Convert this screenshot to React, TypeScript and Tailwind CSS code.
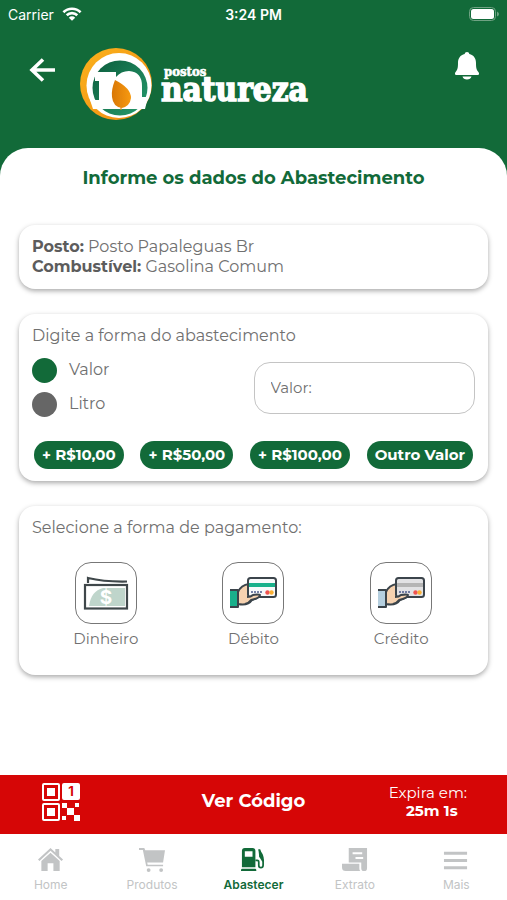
import type { ReactNode } from "react";

const quickValues = ["+ R$10,00", "+ R$50,00", "+ R$100,00", "Outro Valor"];

function StatusBar() {
  return (
    <div className="grid h-7 grid-cols-3 items-center px-2 font-['Inter',sans-serif] text-[14px] text-white">
      <div className="flex items-center gap-2">
        <span>Carrier</span>
        <svg viewBox="0 0 20 14" className="h-[14px] w-[20px]" fill="none" stroke="currentColor" strokeWidth="2.6">
          <path d="M1.4 5.2a12.3 12.3 0 0 1 17.2 0" />
          <path d="M4.7 8.3a7.6 7.6 0 0 1 10.600 0" />
          <path d="M10 13.8 6.8 10.7a4.5 4.5 0 0 1 6.400 0Z" fill="currentColor" stroke="none" />
        </svg>
      </div>
      <span className="text-center font-semibold">3:24 PM</span>
      <svg viewBox="0 0 30 14" className="h-[14px] w-[30px] justify-self-end">
        <rect x="0.5" y="0.5" width="26" height="13" rx="4" fill="none" stroke="#6fa283" />
        <rect x="2" y="2" width="23" height="10" rx="2.5" fill="white" />
        <path d="M28 4.5q2 1 2 2.5t-2 2.5Z" fill="#6fa283" />
      </svg>
    </div>
  );
}

function Logo() {
  return (
    <svg viewBox="0 0 232 76" className="h-[76px] w-[232px]" role="img" aria-label="Postos Natureza">
      <defs>
        <linearGradient id="ring" x1="0" x2="1" y1="0" y2="1">
          <stop offset="0" stopColor="#fbb31c" />
          <stop offset="1" stopColor="#f08a12" />
        </linearGradient>
        <linearGradient id="disc" x1="0" x2="1" y1="0" y2="1">
          <stop offset="0" stopColor="#0c5c3c" />
          <stop offset="1" stopColor="#279c6e" />
        </linearGradient>
        <linearGradient id="leaf" x1="0" x2="1">
          <stop offset="0" stopColor="#d97706" />
          <stop offset="1" stopColor="#f79a10" />
        </linearGradient>
      </defs>
      <circle cx="38" cy="38" r="36" fill="url(#ring)" />
      <circle cx="41" cy="39.500" r="32.500" fill="white" />
      <circle cx="42" cy="42" r="27.500" fill="url(#disc)" />
      <path d="M17 26h21v5q5-6 13-6 13 1 13 15v11h6l-3 12H15l-3-9h9V35h-4Z" fill="white" />
      <path d="M37 34q16 8 16 18-1 8-9 10-9-1-10-11-1-7 3-17Z" fill="url(#leaf)" />
      <path d="M43 49v15" stroke="#e58a10" strokeWidth="1.200" />
      <text x="86" y="30" fill="white" stroke="white" strokeWidth="0.6" className="font-['DejaVu_Serif_Condensed','DejaVu_Serif',serif] text-[13px] font-bold">
        postos
      </text>
      <text x="83" y="55" fill="white" stroke="white" strokeWidth="1.4" className="font-['DejaVu_Serif_Condensed','DejaVu_Serif',serif] text-[33px] font-bold">
        natureza
      </text>
    </svg>
  );
}

function Header() {
  return (
    <header className="flex items-start justify-between px-7 pt-[18px] pb-[26px] text-white">
      <div className="flex items-start">
        <button aria-label="Voltar" className="pt-[10px]">
          <svg viewBox="0 0 28 28" className="size-7" fill="none" stroke="currentColor" strokeWidth="3.6">
            <path d="M27 14H4M15 3.500 4 14l11 10.500" />
          </svg>
        </button>
        <div className="pl-[22px]">
          <Logo />
        </div>
      </div>
      <button aria-label="Notificações" className="pt-[6px]">
        <svg viewBox="0 0 24 28" className="h-7 w-6" fill="currentColor">
          <path d="M12 0c1.300 0 2.200.9 2.300 2.100 4.500 1 6.700 4.500 6.700 8.900 0 5 .6 7 2.200 8.700 1.400 1.500 1 3.300-.7 3.300h-21c-1.700 0-2.100-1.800-.7-3.300C2.400 18 3 16 3 11c0-4.400 2.200-7.900 6.700-8.900C9.800.9 10.700 0 12 0ZM7.500 24.500h9c-.4 1.800-2.300 3-4.500 3s-4.100-1.200-4.500-3Z" />
        </svg>
      </button>
    </header>
  );
}

function Card({ children }: { children: ReactNode }) {
  return (
    <section className="rounded-2xl bg-white px-[13px] shadow-[0_2px_5px_rgba(0,0,0,0.34)]">
      {children}
    </section>
  );
}

function CashIcon() {
  return (
    <svg viewBox="0 0 46 34" className="h-[34px] w-[46px]">
      <path d="M5 7V2Q22 6 44 5.500" fill="none" stroke="#3f474a" strokeWidth="2.2" />
      <rect x="2" y="9" width="42" height="23.500" fill="#fff" stroke="#3f474a" strokeWidth="2.2" />
      <path d="M6 30Q8 15 20 12h22v18Z" fill="#bfd5cb" />
      <text x="23" y="28" textAnchor="middle" fill="white" className="font-['Inter',sans-serif] text-[19px] font-bold">
        $
      </text>
    </svg>
  );
}

function CardIcon({ sleeve, stripe, face }: { sleeve: string; stripe: string; face: string }) {
  return (
    <svg viewBox="0 0 48 32" className="h-[32px] w-[48px]" stroke="#3b444b" strokeWidth="2" strokeLinejoin="round">
      <path d="M1 13h8v17H1" fill={sleeve} />
      <path d="M9 15q3-7 11-8v12l11-2q-1 4-8 6-4 6-14 4Z" fill="#f6d2b0" />
      <rect x="19" y="1" width="28" height="19" rx="2.500" fill={face} />
      <path d="M20 8h26" stroke={stripe} strokeWidth="4" />
      <path d="M22 15h8M31 15h3" stroke="#4c5b8c" strokeWidth="1.500" strokeDasharray="2 1" />
      <circle cx="38.500" cy="15.500" r="2.200" fill="#ef5350" stroke="none" />
      <circle cx="42.500" cy="15.500" r="2.200" fill="#fbb034" stroke="none" />
      <path d="M17 20q5 0 7-2 6-2 7 0 0 3-9 5-2 3-6 3Z" fill="#f6d2b0" stroke="none" />
      <path d="M18 20q4 0 6-2 6-1 7 0 0 3-9 5-2 3-6 4" fill="none" />
    </svg>
  );
}

const payments = [
  { label: "Dinheiro", icon: <CashIcon /> },
  { label: "Débito", icon: <CardIcon sleeve="#19b08b" stripe="#19b08b" face="#f7f9fa" /> },
  { label: "Crédito", icon: <CardIcon sleeve="#b5cfdf" stripe="#b5b5b5" face="#e2e2e4" /> },
];

function QrIcon() {
  return (
    <svg viewBox="0 0 38 38" className="size-[38px]" fill="white">
      <path d="M2 0h14q2 0 2 2v14q0 2-2 2H2q-2 0-2-2V2q0-2 2-2Zm0 2v14h14V2Zm3 3h8v8H5Z" fillRule="evenodd" />
      <path d="M2 20h14q2 0 2 2v14q0 2-2 2H2q-2 0-2-2V22q0-2 2-2Zm0 2v14h14V22Zm3 3h8v8H5Z" fillRule="evenodd" />
      <rect x="20" width="18" height="17" rx="2" />
      <path d="M20 20h5v5h-5ZM33 20h4v4h-4ZM25 25h7v7h-7ZM20 33h4v4h-4ZM32 32h6v6h-6Z" />
      <text x="29" y="13" textAnchor="middle" fill="#d60606" className="font-['Inter',sans-serif] text-[13px] font-bold">
        1
      </text>
    </svg>
  );
}

const tabs = [
  {
    label: "Home",
    icon: (
      <>
        <path d="M13 1 0 13l1.500 1.500L13 4l11.500 10.500L26 13l-4-3.700V2h-4v3.600Z" />
        <path d="m13 6-9.500 8.600V25H10v-8h6v8h6.500V14.600Z" />
      </>
    ),
  },
  {
    label: "Produtos",
    icon: (
      <path d="M0 1h5.500l1 2.500H27L25 16H8.500l.5 2.500h16v1.500H7.500L4 3H0ZM10 22a2 2 0 1 1 0 4 2 2 0 0 1 0-4Zm13 0a2 2 0 1 1 0 4 2 2 0 0 1 0-4Z" />
    ),
  },
  {
    label: "Abastecer",
    active: true,
    icon: (
      <>
        <path d="M2 21V4q0-3 3-3h8q3 0 3 3v17ZM5 4.500V10h8V4.500ZM2 22.500h14q1 0 1 2.500H1q0-2.500 1-2.500Z" fillRule="evenodd" />
        <path d="M16 14h2q1.500 0 1.500 2v3q0 2.500 2.200 2.500T24 19v-4q0-3-3-5V5l-1-2.500" fill="none" stroke="currentColor" strokeWidth="1.800" />
        <path d="M19 2q6 4 6 13h-2l-3-5Z" />
      </>
    ),
  },
  {
    label: "Extrato",
    icon: (
      <>
        <path d="M7 1h19v21q0 3-3 3-3 0-3-3v-6H7Zm4 4.500v2h10v-2Zm3 5v2h8v-2Z" fillRule="evenodd" />
        <path d="M0 17.500h18V22q0 2 1 3H4q-4 0-4-4Z" />
      </>
    ),
  },
  {
    label: "Mais",
    icon: <path d="M1 5h24v3H1ZM1 12.500h24v3H1ZM1 20h24v3H1Z" />,
  },
];

function App() {
  return (
    <div className="flex min-h-screen flex-col bg-[#126a39] font-['Montserrat','Inter',sans-serif] text-[#707070]">
      <StatusBar />
      <Header />

      <main className="flex flex-1 flex-col gap-[25px] rounded-t-[28px] bg-white px-[19px] pt-4">
        <h1 className="pb-2 text-center text-[18px] leading-7 font-bold text-[#126a39]">
          Informe os dados do Abastecimento
        </h1>

        <Card>
          <div className="py-3 text-[16px] leading-5">
            <p><strong className="text-[#5c5c5c]">Posto:</strong> Posto Papaleguas Br</p>
            <p><strong className="text-[#5c5c5c]">Combustível:</strong> Gasolina Comum</p>
          </div>
        </Card>

        <Card>
          <h2 className="pt-3 text-[16px] leading-5">Digite a forma do abastecimento</h2>
          <div className="flex items-center justify-between pt-3">
            <div className="flex flex-col gap-[9px] text-[16px]">
              <label className="flex gap-3 leading-6">
                <input type="radio" name="forma" defaultChecked className="size-[25px] appearance-none rounded-full bg-[#666] checked:bg-[#126a39]" />
                Valor
              </label>
              <label className="flex gap-3 leading-6">
                <input type="radio" name="forma" className="size-[25px] appearance-none rounded-full bg-[#666] checked:bg-[#126a39]" />
                Litro
              </label>
            </div>
            <input
              aria-label="Valor"
              placeholder="Valor:"
              className="h-[52px] w-1/2 rounded-2xl border border-[#c4c4c4] px-4 text-[15px] placeholder:text-[#707070]"
            />
          </div>
          <div className="flex justify-between px-[2px] pt-6 pb-3">
            {quickValues.map((value) => (
              <button key={value} className="rounded-full bg-[#126a39] px-2 text-[15px] leading-7 font-bold text-white">
                {value}
              </button>
            ))}
          </div>
        </Card>

        <Card>
          <h2 className="pt-3 text-[16px] leading-5">Selecione a forma de pagamento:</h2>
          <div className="grid grid-cols-3 py-6">
            {payments.map(({ label, icon }) => (
              <button key={label} className="flex flex-col items-center gap-1 text-[15px]">
                <span className="flex size-[62px] items-center justify-center rounded-2xl border border-[#777]">
                  {icon}
                </span>
                {label}
              </button>
            ))}
          </div>
        </Card>
      </main>

      <div className="bg-white">
        <button className="grid h-[59px] w-full grid-cols-[1fr_auto_1fr] items-center bg-[#d60606] pb-[6px] text-white">
          <span className="pl-[42px]"><QrIcon /></span>
          <span className="text-[18px] font-bold">Ver Código</span>
          <span className="justify-self-end pr-10 text-center text-[15px] leading-[18px]">
            Expira em:
            <strong className="block pl-2">25m 1s</strong>
          </span>
        </button>

        <nav className="grid h-[66px] grid-cols-5 font-['Inter',sans-serif]">
          {tabs.map(({ label, icon, active }) => (
            <a
              key={label}
              href="#"
              className={`flex flex-col items-center gap-1 pt-[13px] text-[12px] leading-4 ${active ? "font-semibold text-[#126a39]" : "text-[#c2c4c5]"}`}
            >
              <svg viewBox="0 0 27 27" className="size-[26px]" fill="currentColor">{icon}</svg>
              {label}
            </a>
          ))}
        </nav>
      </div>
    </div>
  );
}

export default App;
